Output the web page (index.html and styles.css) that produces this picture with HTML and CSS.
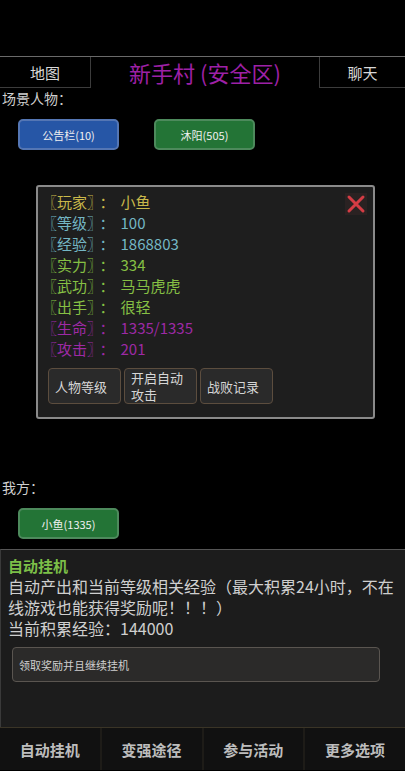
FILE: index.html
```html
<!DOCTYPE html>
<html lang="zh-CN">
<head>
    <meta charset="UTF-8">
    <meta name="viewport" content="width=device-width, initial-scale=1.0">
    <title>新手村</title>
    <link rel="stylesheet" href="styles.css">
</head>
<body>
    <div class="top-space"></div>
    <header class="scene-bar">
        <div class="side-btn left">地图</div>
        <h1 class="scene-title">新手村 (安全区)</h1>
        <div class="side-btn right">聊天</div>
    </header>

    <div class="section-label">场景人物：</div>
    <div class="npc-row">
        <div class="npc-btn blue">公告栏(10)</div>
        <div class="npc-btn green">沐阳(505)</div>
    </div>

    <div class="dialog">
        <svg class="close" width="22" height="22" viewBox="0 0 22 22">
            <rect x="0" y="0" width="22" height="22" fill="#2a2222"/>
            <path d="M4 4 L18 18 M18 4 L4 18" stroke="#d43c44" stroke-width="3" stroke-linecap="round"/>
        </svg>
        <div class="stat yellow"><span class="key">〖玩家〗</span><span class="colon">：</span>小鱼</div>
        <div class="stat cyan"><span class="key">〖等级〗</span><span class="colon">：</span>100</div>
        <div class="stat cyan"><span class="key">〖经验〗</span><span class="colon">：</span>1868803</div>
        <div class="stat lime"><span class="key">〖实力〗</span><span class="colon">：</span>334</div>
        <div class="stat lime"><span class="key">〖武功〗</span><span class="colon">：</span>马马虎虎</div>
        <div class="stat lime"><span class="key">〖出手〗</span><span class="colon">：</span>很轻</div>
        <div class="stat purple"><span class="key">〖生命〗</span><span class="colon">：</span>1335/1335</div>
        <div class="stat purple"><span class="key">〖攻击〗</span><span class="colon">：</span>201</div>
        <div class="dialog-actions">
            <div class="act-btn">人物等级</div>
            <div class="act-btn">开启自动攻击</div>
            <div class="act-btn">战败记录</div>
        </div>
    </div>

    <div class="section-label mine">我方：</div>
    <div class="npc-row">
        <div class="npc-btn green">小鱼(1335)</div>
    </div>

    <div class="idle-panel">
        <div class="idle-title">自动挂机</div>
        <p class="idle-text">自动产出和当前等级相关经验（最大积累24小时，不在线游戏也能获得奖励呢！！！）<br>当前积累经验：144000</p>
        <div class="claim-btn">领取奖励并且继续挂机</div>
    </div>

    <nav class="tabbar">
        <div class="tab">自动挂机</div>
        <div class="tab">变强途径</div>
        <div class="tab">参与活动</div>
        <div class="tab">更多选项</div>
    </nav>
</body>
</html>
```

FILE: styles.css
```css
body {
    margin: 0;
    background-color: #000;
    color: #cfcfcf;
    font-family: "Noto Sans CJK SC", "Noto Sans", sans-serif;
    width: 405px;
    height: 771px;
    overflow: hidden;
    display: flex;
    flex-direction: column;
}

.top-space {
    height: 56px;
    border-bottom: 1px solid #6a6a6a;
}

.scene-bar {
    display: flex;
    align-items: stretch;
    height: 31px;
}

.side-btn {
    width: 90px;
    display: flex;
    align-items: center;
    justify-content: center;
    font-size: 15px;
    color: #d8d8d8;
    border-bottom: 1px solid #3c3c3c;
}

.side-btn.left {
    border-right: 1px solid #3c3c3c;
}

.side-btn.right {
    width: 85px;
    border-left: 1px solid #3c3c3c;
}

.scene-title {
    flex: 1;
    margin: 0;
    font-size: 22px;
    font-weight: normal;
    color: #9e20a6;
    text-align: center;
    line-height: 31px;
}

.section-label {
    font-size: 14px;
    line-height: 20px;
    padding-left: 2px;
}

.section-label.mine {
    margin-top: 58px;
}

.npc-row {
    display: flex;
    gap: 35px;
    padding-left: 18px;
    margin-top: 11px;
}

.npc-btn {
    width: 97px;
    height: 27px;
    border-radius: 5px;
    display: flex;
    align-items: center;
    justify-content: center;
    font-size: 11px;
    color: #f0f0f0;
}

.npc-btn.blue {
    background-color: #2656a6;
    border: 2px solid #5476b4;
}

.npc-btn.green {
    background-color: #237436;
    border: 2px solid #4d8a5c;
}

.dialog {
    position: relative;
    margin: 35px 0 0 36px;
    width: 323px;
    height: 214px;
    padding: 4px 8px 12px 4px;
    background-color: #1e1e1e;
    border: 2px solid #8a8a8a;
    border-radius: 3px;
}

.close {
    position: absolute;
    top: 6px;
    right: 6px;
}

.stat {
    font-size: 15px;
    line-height: 21px;
}

.colon {
    margin: 0 6px 0 5px;
}

.yellow { color: #c9b84a; }
.cyan { color: #74b6c4; }
.lime { color: #86c044; }
.purple { color: #9d2aa5; }

.dialog-actions {
    display: flex;
    gap: 3px;
    margin: 9px 0 0 6px;
}

.act-btn {
    width: 59px;
    height: 32px;
    padding: 1px 6px;
    display: flex;
    align-items: center;
    font-size: 13px;
    line-height: 17px;
    color: #d6d6d6;
    background-color: #2a2a2a;
    border: 1px solid #5c4d3e;
    border-radius: 4px;
}

.idle-panel {
    margin-top: 10px;
    height: 172px;
    padding: 5px 7px 0 7px;
    background-color: #1c1c1c;
    border-top: 1px solid #555;
    border-left: 1px solid #3a3a3a;
}

.idle-title {
    font-size: 15px;
    font-weight: bold;
    color: #7cbf48;
    line-height: 21px;
}

.idle-text {
    margin: 0;
    font-size: 16px;
    line-height: 21px;
    color: #cfcfcf;
}

.claim-btn {
    margin: 8px 0 0 4px;
    width: 360px;
    height: 33px;
    padding-left: 6px;
    display: flex;
    align-items: center;
    font-size: 11px;
    color: #cfcfcf;
    background-color: #2b2a29;
    border: 1px solid #5a5550;
    border-radius: 4px;
}

.tabbar {
    display: flex;
    height: 42px;
    background-color: #111;
    border-top: 1px solid #3a3426;
}

.tab {
    flex: 1;
    display: flex;
    align-items: center;
    justify-content: center;
    font-size: 15px;
    font-weight: bold;
    color: #bdbdbd;
    border-right: 2px solid #1e1c18;
}

.tab:last-child {
    border-right: none;
}
```
